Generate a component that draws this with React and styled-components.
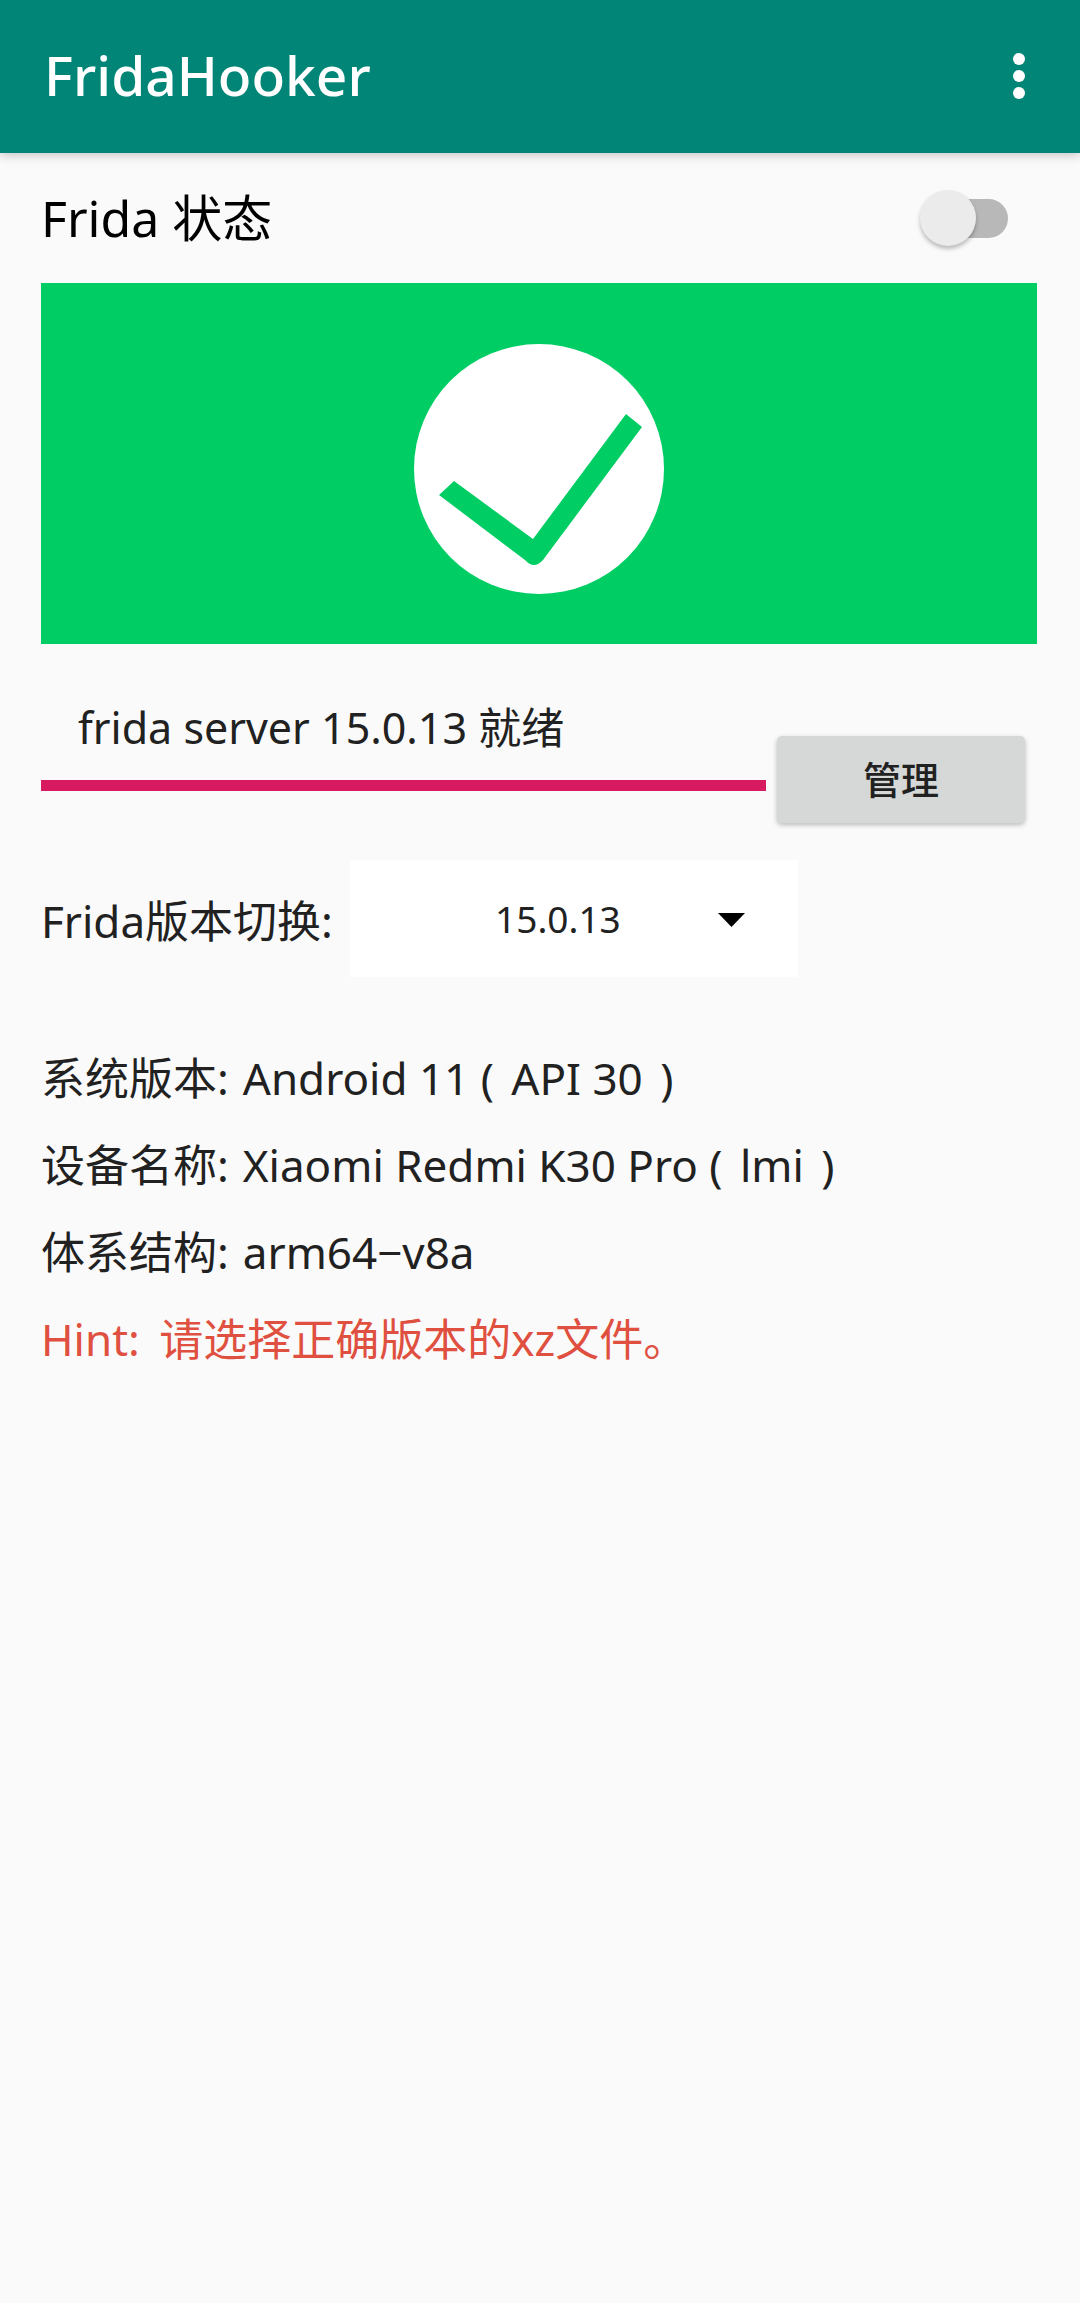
import React from "react";
import styled, { createGlobalStyle } from "styled-components";

const GlobalStyle = createGlobalStyle`
  *, *::before, *::after { box-sizing: border-box; }
  body {
    margin: 0;
    background: #fafafa;
    color: #212121;
    font-family: "Noto Sans", "Noto Sans CJK SC", sans-serif;
    font-size: 44px;
  }
  h1, h2, p, dl, dt, dd { margin: 0; font-weight: 400; }
  button, select { font-family: inherit; color: inherit; border: 0; }
`;

const AppBar = styled.header`
  display: flex;
  align-items: center;
  justify-content: space-between;
  height: 153px;
  padding: 0 40px 0 44px;
  background: #018577;
  color: #fff;
  box-shadow: 0 2px 10px rgba(0, 0, 0, 0.22);
`;

const Title = styled.h1`
  padding-bottom: 4px;
  font-size: 55px;
  font-weight: 500;
  line-height: 64px;
`;

const MenuButton = styled.button`
  display: grid;
  place-items: center;
  width: 42px;
  height: 64px;
  padding: 0 0 2px;
  background: transparent;
`;

const Content = styled.main`
  padding: 0 43px 0 41px;
`;

const StateRow = styled.div`
  display: flex;
  align-items: center;
  justify-content: space-between;
  height: 130px;
  padding-right: 29px;
  color: #000;
  font-size: 50px;
  line-height: 64px;
`;

const Switch = styled.input`
  appearance: none;
  display: grid;
  align-items: center;
  width: 88px;
  height: 56px;
  margin: 0;

  &::before,
  &::after {
    content: "";
    grid-area: 1 / 1;
  }
  &::before {
    justify-self: end;
    width: 80px;
    height: 39px;
    border-radius: 20px;
    background: #b8b8b8;
  }
  &::after {
    width: 56px;
    height: 56px;
    border-radius: 50%;
    background: #ebebeb;
    box-shadow: 0 3px 4px rgba(0, 0, 0, 0.26);
  }
  &:checked::after { justify-self: end; }
`;

const Banner = styled.section`
  display: grid;
  place-items: center;
  height: 361px;
  padding-top: 10px;
  background: #00ce65;
`;

const ServerRow = styled.div`
  display: flex;
  align-items: flex-end;
  gap: 11px;
  padding: 52px 12px 0 0;
`;

const ServerStatus = styled.p`
  flex: 1;
  height: 95px;
  margin-bottom: 32px;
  padding-left: 37px;
  border-bottom: 11px solid #d81b60;
  font-size: 43px;
  line-height: 64px;
`;

const ManageButton = styled.button`
  width: 248px;
  height: 87px;
  padding: 0 0 4px;
  border-radius: 5px;
  background: #d6d7d7;
  font-size: 38px;
  font-weight: 500;
  box-shadow: 0 2px 5px rgba(0, 0, 0, 0.26);
`;

const VersionRow = styled.div`
  display: flex;
  align-items: center;
  gap: 17px;
  padding-top: 37px;
`;

const SelectBox = styled.div`
  display: grid;
  align-items: center;
  width: 448px;
  height: 117px;
  background: #fff;
`;

const VersionSelect = styled.select`
  grid-area: 1 / 1;
  appearance: none;
  height: 100%;
  padding: 0 32px 0 0;
  background: transparent;
  font-size: 37px;
  text-align: center;
  text-align-last: center;
`;

const Arrow = styled.svg`
  grid-area: 1 / 1;
  justify-self: end;
  margin: 2px 53px 0 0;
  pointer-events: none;
`;

const InfoList = styled.dl`
  padding-top: 58px;
  line-height: 87px;
`;

const InfoRow = styled.div`
  display: flex;
  gap: 14px;
`;

const Detail = styled.span`
  margin: 0 6px;
`;

const Hint = styled.p`
  line-height: 87px;
  color: #e05040;
`;

const HintLabel = styled.span`
  margin-right: 8px;
`;

const INFO = [
  { name: "系统版本:", value: "Android 11", detail: "API 30" },
  { name: "设备名称:", value: "Xiaomi Redmi K30 Pro", detail: "lmi" },
  { name: "体系结构:", value: "arm64−v8a" },
];

export default function App() {
  return (
    <>
      <GlobalStyle />
      <AppBar>
        <Title>FridaHooker</Title>
        <MenuButton aria-label="Menu">
          <svg width="12" height="46" viewBox="0 0 12 46" fill="#fff">
            <circle cx="6" cy="6" r="6" />
            <circle cx="6" cy="23" r="6" />
            <circle cx="6" cy="40" r="6" />
          </svg>
        </MenuButton>
      </AppBar>
      <Content>
        <StateRow>
          <label htmlFor="state">Frida 状态</label>
          <Switch id="state" type="checkbox" role="switch" />
        </StateRow>
        <Banner>
          <svg width="250" height="250" viewBox="0 0 250 250">
            <circle cx="125" cy="125" r="125" fill="#fff" />
            <path
              d="M40 137 L119 195 L212 70 L228 83 L129 216 Q120 226 111 216 L25 151 Z"
              fill="#00ce65"
            />
          </svg>
        </Banner>
        <ServerRow>
          <ServerStatus>frida server 15.0.13 就绪</ServerStatus>
          <ManageButton>管理</ManageButton>
        </ServerRow>
        <VersionRow>
          <label htmlFor="version">Frida版本切换:</label>
          <SelectBox>
            <VersionSelect id="version" defaultValue="15.0.13">
              <option>15.0.13</option>
            </VersionSelect>
            <Arrow width="27" height="14" viewBox="0 0 27 14">
              <path d="M0 0H27L13.500 14Z" fill="#000" />
            </Arrow>
          </SelectBox>
        </VersionRow>
        <InfoList>
          {INFO.map(({ name, value, detail }) => (
            <InfoRow key={name}>
              <dt>{name}</dt>
              <dd>
                {value}
                {detail && (
                  <>
                    {" ( "}
                    <Detail>{detail}</Detail>
                    {" )"}
                  </>
                )}
              </dd>
            </InfoRow>
          ))}
        </InfoList>
        <Hint>
          <HintLabel>Hint:</HintLabel> 请选择正确版本的xz文件。
        </Hint>
      </Content>
    </>
  );
}
